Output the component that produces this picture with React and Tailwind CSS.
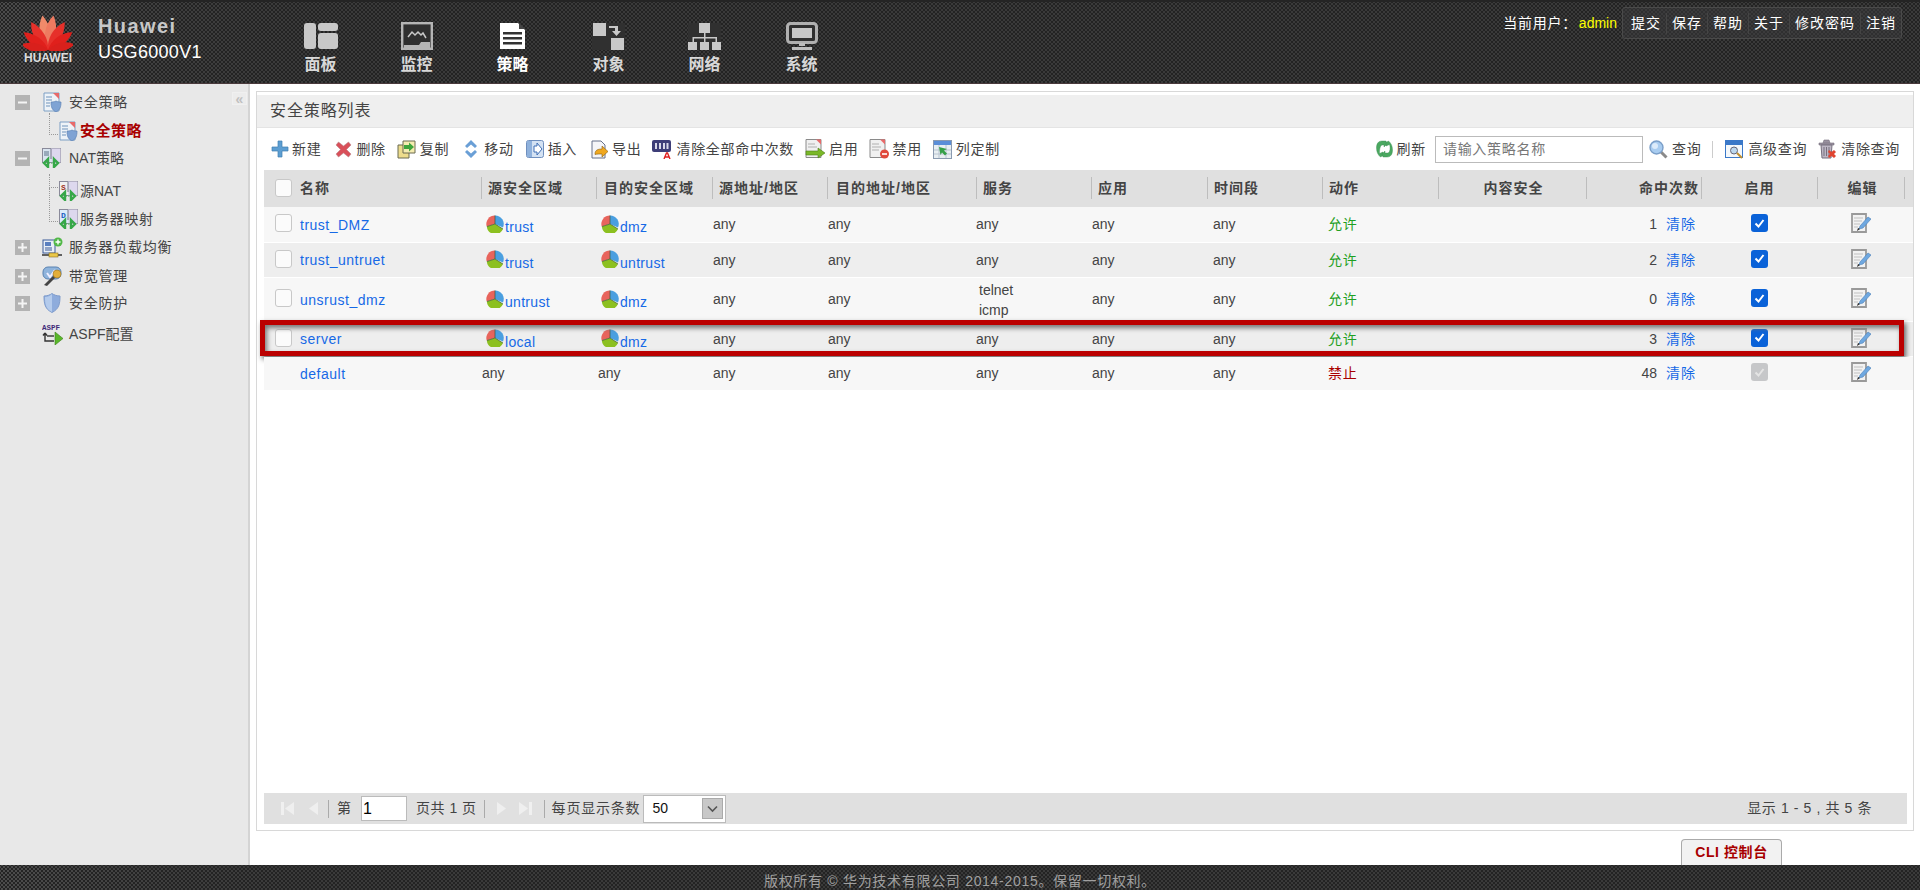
import React from "react";

const FONT = "font-['Liberation_Sans','Noto_Sans_CJK_SC',sans-serif]";
const DOTS =
  "bg-[radial-gradient(circle,#232323_0.9px,transparent_1.2px),radial-gradient(circle,#232323_0.9px,transparent_1.2px),linear-gradient(to_right,#4c4c4c,#3e3e3e_170px,#3a3a3a_300px)] bg-size-[4px_4px,4px_4px,100%_100%] bg-position-[0_0,2px_2px,0_0]";
const COLS =
  "grid grid-cols-[217px_115px_116px_115px_149px_115px_116px_115px_116px_148px_115px_116px_88px]";

function Logo() {
  const petals = [
    [-9, 1, "#f08a6a"],
    [9, 1, "#ee7a60"],
    [-31, 0.93, "#e6302a"],
    [31, 0.93, "#e6302a"],
    [-54, 0.86, "#e0201c"],
    [54, 0.86, "#e0201c"],
    [-78, 0.78, "#d9201c"],
    [78, 0.78, "#d9201c"],
  ];
  return (
    <svg width="50" height="38" viewBox="0 0 50 38" className="block">
      {petals.map(([r, s, c], i) => (
        <path
          key={i}
          d="M0 0C-7 -9 -8 -24 0 -35C7 -24 7 -9 0 0Z"
          fill={c}
          transform={`translate(25 37) rotate(${r}) scale(${s})`}
        />
      ))}
    </svg>
  );
}

const N1 = () => (
  <svg width="34" height="26" viewBox="0 0 34 26" fill="#c8c8c8">
    <rect x="0" y="0" width="12" height="26" rx="3" />
    <rect x="14" y="0" width="20" height="8" rx="3" />
    <rect x="14" y="10" width="20" height="16" rx="3" />
  </svg>
);
const N2 = () => (
  <svg width="32" height="28" viewBox="0 0 32 28">
    <rect x="1.2" y="1.2" width="29.6" height="25.6" fill="#2f2f2f" stroke="#b5b5b5" strokeWidth="2.4" />
    <path d="M7 15l4-5 3 3 3-3 3 3 2-2 3 5" fill="none" stroke="#c8c8c8" strokeWidth="1.5" />
    <path d="M3 23h15l2-3h9v6H3z" fill="#b5b5b5" />
  </svg>
);
const N3 = () => (
  <svg width="27" height="26" viewBox="0 0 27 26">
    <path d="M1 0h18l7 7v19H1z" fill="#fff" />
    <path d="M20 0l6 6h-6z" fill="#444" />
    <path d="M4 9h19v2.5H4zM4 14h19v2.5H4zM4 19h19v2.5H4z" fill="#333" />
  </svg>
);
const N4 = () => (
  <svg width="33" height="27" viewBox="0 0 33 27">
    <rect width="33" height="27" fill="#303030" />
    <rect x="1" y="0" width="13" height="13" fill="#c8c8c8" />
    <rect x="19" y="15" width="13" height="12" fill="#c8c8c8" />
    <path d="M17 3h9v5h3l-4.500 5-4.500-5h3V5h-6z" fill="#c8c8c8" />
  </svg>
);
const N5 = () => (
  <svg width="33" height="27" viewBox="0 0 33 27" fill="#c8c8c8">
    <rect width="33" height="27" fill="#303030" />
    <rect x="11" y="0" width="11" height="10" />
    <rect x="0" y="19" width="9" height="8" />
    <rect x="12" y="19" width="9" height="8" />
    <rect x="24" y="19" width="9" height="8" />
    <path d="M16 10h1.500v4H29v5h-1.500v-3.500h-10V19H16v-3.500H6V19H4.500v-5H16z" />
  </svg>
);
const N6 = () => (
  <svg width="32" height="28" viewBox="0 0 32 28">
    <rect x="1.500" y="1.500" width="29" height="19" rx="3" fill="#303030" stroke="#b0b0b0" strokeWidth="3" />
    <rect x="6" y="6" width="20" height="10" fill="#c8c8c8" />
    <path d="M13 21h6v3h-6zM6 25h20v3H6z" fill="#bdbdbd" />
  </svg>
);

const Pie = () => (
  <svg width="18" height="18" viewBox="0 0 18 18" className="shrink-0">
    <path d="M9 9L.7 11.500A8.500 8.500 0 0 1 9 .5z" fill="#e8645c" />
    <path d="M9 9V.5a8.500 8.500 0 0 1 8 12z" fill="#4a9fe0" />
    <path d="M.8 11.500L9 9l8 5a8.500 8.500 0 0 1-16.200-2.500z" fill="#8cc020" />
    <path d="M9 9l8 5M9 9L1 11.500M9 9V.5" stroke="#3a5a3a" strokeWidth=".7" />
  </svg>
);

const Check = ({ on, off }) =>
  on ? (
    <div className={`w-[17px] h-[18px] rounded-[3px] flex items-center justify-center ${off ? "bg-[#c6c7c9]" : "bg-[#0a62d8]"}`}>
      <svg width="13" height="13" viewBox="0 0 13 13">
        <path d="M2.500 6.500l3 3 5-6.500" fill="none" stroke={off ? "#e4e4e4" : "#fff"} strokeWidth="2" />
      </svg>
    </div>
  ) : (
    <div className="w-[17px] h-[18px] rounded-[3px] border border-[#c8c8c8] bg-[#fbfbfb]" />
  );

const Edit = () => (
  <svg width="20" height="20" viewBox="0 0 20 20">
    <path d="M1 1h14v18H1z" fill="#f2f2f2" stroke="#9a9a9a" strokeWidth="1.800" />
    <path d="M3 5h9M3 8h8M3 11h6M3 14h4" stroke="#c0c0c0" strokeWidth="1.200" />
    <path d="M8 16l1-3 8-9 3 2-8 9z" fill="#6fa8e0" stroke="#4a80b8" strokeWidth=".6" />
    <path d="M6 18l3-2-2-1z" fill="#222" />
  </svg>
);

const Ic = {
  plus: (
    <svg width="18" height="18" viewBox="0 0 18 18">
      <path d="M7 1h4v6h6v4h-6v6H7v-6H1V7h6z" fill="#5d9ed2" stroke="#3f7eb3" strokeWidth=".7" strokeLinejoin="round" />
    </svg>
  ),
  del: (
    <svg width="17" height="17" viewBox="0 0 17 17">
      <path d="M3.500 1L8.500 5l5-4 2.500 3-4.500 4.500 4.500 4.500-2.500 3-5-4-5 4L1 13l4.500-4.500L1 4z" fill="#d9505a" stroke="#b8868a" strokeWidth=".6" />
    </svg>
  ),
  copy: (
    <svg width="19" height="19" viewBox="0 0 19 19">
      <path d="M1 5h11v13H1z" fill="#eddc8c" stroke="#6a6a50" />
      <path d="M6 1h12v12H6z" fill="#f5ecb0" stroke="#6a6a50" />
      <path d="M7 5h5V2.500L17 7l-5 4.500V9H7z" fill="#3fa53c" />
    </svg>
  ),
  move: (
    <svg width="14" height="20" viewBox="0 0 14 20">
      <path d="M7 1l6 6-2 2-4-3.500L3 9 1 7z" fill="#6a9fd6" />
      <path d="M7 19l6-6-2-2-4 3.500L3 11l-2 2z" fill="#6a9fd6" />
    </svg>
  ),
  insert: (
    <svg width="18" height="18" viewBox="0 0 18 18">
      <rect x=".5" y=".5" width="17" height="17" rx="2" fill="#d4e2f3" stroke="#6f8fbe" />
      <path d="M1 1h5v16H1z" fill="#8fb1dc" />
      <path d="M8 6h3V3l5 6-5 6v-3H8z" fill="#fff" stroke="#3f6fb5" />
    </svg>
  ),
  exp: (
    <svg width="19" height="19" viewBox="0 0 19 19">
      <path d="M2 1h9l4 4v13H2z" fill="#f5f5f8" stroke="#66708a" />
      <path d="M5 14c0-4 3-5 7-5V6l6 5.500-6 5.500v-3c-3 0-5 0-7 .5z" fill="#f0a820" stroke="#8a6010" strokeWidth=".6" />
    </svg>
  ),
  clear: (
    <svg width="20" height="20" viewBox="0 0 20 20">
      <rect x="0" y="1" width="19" height="12" rx="2" fill="#3e3e78" />
      <path d="M4 4v6M8 4v6M12 4v6M15.500 4v6" stroke="#d8d8e8" strokeWidth="2" />
      <path d="M12 20l2.500-6h1l2.500 6M13 18h4" stroke="#e02020" strokeWidth="1.400" fill="none" />
    </svg>
  ),
  on: (
    <svg width="20" height="20" viewBox="0 0 20 20">
      <path d="M1 .5h15v18H1z" fill="#f0f0f0" stroke="#8a8a8a" />
      <path d="M11 .5l5 5v-5z" fill="#e86a6a" />
      <path d="M3 5h7M3 8h9" stroke="#b0b0b0" />
      <path d="M1 12h12V9l7 5-7 5v-3H1z" fill="#7ab828" stroke="#4f8018" strokeWidth=".6" />
    </svg>
  ),
  off: (
    <svg width="20" height="20" viewBox="0 0 20 20">
      <path d="M1 .5h15v18H1z" fill="#f0f0f0" stroke="#8a8a8a" />
      <path d="M11 .5l5 5v-5z" fill="#e86a6a" />
      <path d="M3 5h7M3 8h9M3 11h7" stroke="#b0b0b0" />
      <circle cx="15.500" cy="15" r="4.500" fill="#e04a3c" />
      <path d="M13 15h5" stroke="#fff" strokeWidth="1.600" />
    </svg>
  ),
  cols: (
    <svg width="19" height="19" viewBox="0 0 19 19">
      <rect x=".5" y=".5" width="18" height="18" fill="#e8eef2" stroke="#8a9ab0" />
      <rect x="1" y="1" width="17" height="4" fill="#5a8ed8" />
      <path d="M1 10h17M1 14h17M6 5v13M13 5v13" stroke="#b8c4d0" />
      <path d="M6 7l8 2-3 1.500 3 3-2 2-3-3L7.500 15z" fill="#35a048" />
    </svg>
  ),
  refresh: (
    <svg width="17" height="18" viewBox="0 0 17 18">
      <path d="M10 1H6C2 1 .5 4 .5 8c0 4 1.500 7 4 9l2.500-1.500V12l-3.500 1.500C3.500 11 3.500 6 6 5h2v2l3-3z" fill="#4aa860" stroke="#3a8a50" strokeWidth=".4" />
      <path d="M7 17h4c4 0 5.500-3 5.500-7 0-4-1.500-7-4-9L10 2.500V6l3.500-1.500c1 2.500 1 7.500-1.500 8.500H9v-2l-3 3z" fill="#4aa860" stroke="#3a8a50" strokeWidth=".4" />
    </svg>
  ),
  search: (
    <svg width="19" height="19" viewBox="0 0 19 19">
      <path d="M12 12l5.500 5.500" stroke="#8a8a8a" strokeWidth="3" />
      <circle cx="7.500" cy="7.500" r="6.500" fill="#a8ccf0" stroke="#7a9ec8" strokeWidth="1.400" />
      <circle cx="6" cy="6" r="3" fill="#dcebfa" />
    </svg>
  ),
  adv: (
    <svg width="19" height="19" viewBox="0 0 19 19">
      <rect x=".5" y=".5" width="17" height="17" fill="#f4f8fb" stroke="#3a78c8" />
      <rect x="1" y="1" width="16" height="4" fill="#3a78c8" />
      <circle cx="9" cy="10.500" r="3.500" fill="#bcd8ef" stroke="#667" />
      <path d="M12 13l5 5" stroke="#c09030" strokeWidth="2" />
    </svg>
  ),
  trash: (
    <svg width="20" height="20" viewBox="0 0 20 20">
      <path d="M1 4h15v2H1zM5 4l1-3h5l1 3" fill="#9a92a0" stroke="#77707e" strokeWidth=".6" />
      <path d="M3 6h11l-1 13H4z" fill="#bdb6c4" stroke="#77707e" />
      <path d="M6 8v9M8.500 8v9M11 8v9" stroke="#77707e" />
      <path d="M11 11l2.500 2 2.500-2 2 2-2 2 2 2-2 2-2.500-2-2.500 2-1-2 2-2-2-2z" fill="#e04430" />
    </svg>
  ),
};

const DocShield = () => (
  <svg width="19" height="20" viewBox="0 0 19 20" className="shrink-0">
    <path d="M1 1h15v18H1z" fill="#eef3f8" stroke="#7d9fc4" />
    <path d="M10 1l6 6V1z" fill="#e86a6a" />
    <path d="M3 5h6M3 8h6M3 11h4M3 14h4" stroke="#6f93bb" />
    <path d="M8 10c3 0 4-.5 5-1 1 .5 2 1 5 1 0 5-1 8-5 10-4-2-5-5-5-10z" fill="#7fa3d4" stroke="#5d82b5" strokeWidth=".7" />
  </svg>
);
const Nat = ({ l, c, bg }) => (
  <svg width="20" height="20" viewBox="0 0 20 20" className="shrink-0">
    <rect x=".5" y=".5" width="18" height="14" fill={bg} stroke="#8a8a9a" />
    <rect x="9" y=".5" width="9.500" height="14" fill="#ddd8ee" />
    <path d="M9 1v10" stroke="#778" />
    {l ? (
      <text x="2" y="9" fontSize="8" fontWeight="700" fill={c} fontFamily="Liberation Mono">{l}</text>
    ) : (
      <path d="M2 3h5v5H2z" fill="#9ab" />
    )}
    <path d="M6 11l-4 4 4 4zM12 11l4 4-4 4z" fill="none" stroke="#36a848" strokeWidth="2.400" />
    <path d="M6.500 15h5" stroke="#36a848" strokeWidth="1.200" strokeDasharray="1.500 1" />
  </svg>
);
const Lb = () => (
  <svg width="21" height="21" viewBox="0 0 21 21" className="shrink-0">
    <rect x="1" y="3" width="12" height="13" fill="#e8eef6" stroke="#3a5a98" />
    <rect x="3" y="5" width="6" height="4" fill="#5a7fbf" />
    <path d="M3 11h7M3 13h7" stroke="#3a5a98" />
    <circle cx="16" cy="5" r="4.500" fill="#52b848" />
    <path d="M13.500 5h5M16 2.500v5" stroke="#fff" strokeWidth="1.400" />
    <path d="M0 18h20" stroke="#333" strokeWidth="1.500" />
    <rect x="7" y="16" width="9" height="4" fill="#eac84a" stroke="#8a7020" strokeWidth=".6" />
  </svg>
);
const Band = () => (
  <svg width="20" height="20" viewBox="0 0 20 20" className="shrink-0">
    <rect x="1" y="1" width="18" height="12" rx="5" fill="#8fb4dc" stroke="#5a82b0" />
    <path d="M5 7l3 4 5-7" fill="none" stroke="#eef" strokeWidth="2" />
    <path d="M2 19l10-10 2 2L5 20z" fill="#444" />
    <circle cx="15" cy="8" r="4" fill="#e2ae3a" stroke="#9a7420" strokeWidth=".6" />
  </svg>
);
const Shield = () => (
  <svg width="18" height="20" viewBox="0 0 18 20" className="shrink-0">
    <path d="M1 3c3 0 6-1 8-2.500C11 2 14 3 17 3c0 8-1 13-8 16.500C2 16 1 11 1 3z" fill="#8eacdc" stroke="#7f9ccc" />
    <path d="M9 1v18C3 16 2 11 2 4c3 0 5-1 7-3z" fill="#b4cbec" />
  </svg>
);
const Aspf = () => (
  <svg width="21" height="22" viewBox="0 0 21 22" className="shrink-0">
    <text x="0" y="6.500" fontSize="7.500" fontWeight="700" fill="#3f2a78" fontFamily="Liberation Mono">ASPF</text>
    <path d="M3 10v8h9M3 10l-2 2.500M3 10l2 2.500" stroke="#333" strokeWidth="1.400" fill="none" />
    <path d="M13 9l8 6.500-8 6.500z" fill="#5ab82a" stroke="#3a8018" strokeWidth=".6" />
    <path d="M5 13h7" stroke="#333" strokeWidth="1.400" />
  </svg>
);

const Pm = ({ minus }) => (
  <div className="w-[15px] h-[15px] bg-[#b3b3b3] flex items-center justify-center shrink-0">
    <svg width="11" height="11" viewBox="0 0 11 11">
      <path d={minus ? "M1 4.500h9v2H1z" : "M1 4.500h3.500V1h2v3.500H10v2H6.500V10h-2V6.500H1z"} fill="#f4f4f4" />
    </svg>
  </div>
);

function SideRow({ mt, minus, plus, icon, children, iconGap }) {
  return (
    <div className={`flex items-center h-[28px] pl-[15px] ${mt}`}>
      {minus || plus ? <Pm minus={minus} /> : <div className="w-[15px]" />}
      <div className="w-[34px] flex justify-end pr-[2px] shrink-0">
        <div className="w-[20px] flex justify-center">{icon}</div>
      </div>
      <span className={`text-[14px] text-[#444] ${iconGap}`}>{children}</span>
    </div>
  );
}

function SubRow({ mt, line, icon, children, cls }) {
  return (
    <div className={`flex items-center h-[28px] pl-[49px] ${mt}`}>
      <div className={`w-[9px] border-l border-b border-dotted border-[#999] self-start ${line}`} />
      <div className="w-[21px] flex justify-center shrink-0">{icon}</div>
      <span className={`ml-[1px] ${cls}`}>{children}</span>
    </div>
  );
}

function Sidebar() {
  return (
    <aside className="w-[250px] shrink-0 bg-[#e8e8e8] border-r-2 border-[#d4d4d4] relative">
      <div className="absolute right-[1px] top-[8px] w-[15px] h-[13px] bg-[#ececec] border border-[#f0f0f0] flex items-center justify-center text-[#c0c0c0] text-[14px] leading-none font-bold">«</div>
      <SideRow mt="mt-[4px]" minus icon={<DocShield />} iconGap="ml-[5px] tracking-[0.75px]">安全策略</SideRow>
      <SubRow mt="mt-[1px]" line="mt-[-4px] h-[22px]" icon={<DocShield />} cls="text-[15px] font-bold text-[#a80000] tracking-[0.5px]">安全策略</SubRow>
      <SideRow mt="mt-[-1px]" minus icon={<Nat bg="#d9e4f0" />} iconGap="ml-[5px]">NAT策略</SideRow>
      <SubRow mt="mt-[5px]" line="mt-[-3px] h-[14px]" icon={<Nat l="S" c="#a03020" bg="#f0f0f0" />} cls="text-[14px] text-[#444]">源NAT</SubRow>
      <SubRow mt="mt-0" line="mt-[-17px] h-[34px]" icon={<Nat l="D" c="#2060c0" bg="#dcebfa" />} cls="text-[14px] text-[#444] tracking-[0.75px]">服务器映射</SubRow>
      <SideRow mt="mt-0" plus icon={<Lb />} iconGap="ml-[5px] tracking-[0.75px]">服务器负载均衡</SideRow>
      <SideRow mt="mt-[1px]" plus icon={<Band />} iconGap="ml-[5px] tracking-[0.75px]">带宽管理</SideRow>
      <SideRow mt="mt-[-1px]" plus icon={<Shield />} iconGap="ml-[5px] tracking-[0.75px]">安全防护</SideRow>
      <SideRow mt="mt-[3px]" icon={<Aspf />} iconGap="ml-[5px]">ASPF配置</SideRow>
    </aside>
  );
}

function Tool({ icon, label, ml, gap = "ml-[3px]" }) {
  return (
    <div className={`flex items-center shrink-0 ${ml}`}>
      {icon}
      <span className={`${gap} text-[14px] text-[#444] tracking-[0.7px] whitespace-nowrap`}>{label}</span>
    </div>
  );
}

function Toolbar() {
  return (
    <div className="h-[42px] flex items-center pl-[14px] pr-[13px]">
      <Tool icon={Ic.plus} label="新建" />
      <Tool icon={Ic.del} label="删除" ml="ml-[14px]" gap="ml-[4px]" />
      <Tool icon={Ic.copy} label="复制" ml="ml-[11px]" gap="ml-[4px]" />
      <Tool icon={Ic.move} label="移动" ml="ml-[15px]" gap="ml-[6px]" />
      <Tool icon={Ic.insert} label="插入" ml="ml-[12px]" gap="ml-[4px]" />
      <Tool icon={Ic.exp} label="导出" ml="ml-[13px]" />
      <Tool icon={Ic.clear} label="清除全部命中次数" ml="ml-[11px]" gap="ml-[4px]" />
      <Tool icon={Ic.on} label="启用" ml="ml-[11px]" gap="ml-[4px]" />
      <Tool icon={Ic.off} label="禁用" ml="ml-[11px]" />
      <Tool icon={Ic.cols} label="列定制" ml="ml-[11px]" gap="ml-[4px]" />
      <div className="flex-1" />
      <Tool icon={Ic.refresh} label="刷新" gap="ml-[4px]" />
      <div className="ml-[9px] w-[208px] h-[27px] border border-[#bbb] pl-[7px] flex items-center text-[14px] text-[#777] tracking-[0.7px]">请输入策略名称</div>
      <Tool icon={Ic.search} label="查询" ml="ml-[6px]" gap="ml-[4px]" />
      <div className="ml-[11px] w-px h-[17px] bg-[#ccc]" />
      <Tool icon={Ic.adv} label="高级查询" ml="ml-[12px]" gap="ml-[4px]" />
      <Tool icon={Ic.trash} label="清除查询" ml="ml-[11px]" gap="ml-[3px]" />
    </div>
  );
}

function Th({ cls, children, first }) {
  return (
    <div className={`h-[22px] flex items-center text-[14px] font-bold text-[#444] tracking-[1px] ${first ? "" : "border-l border-[#bdbdbd]"} ${cls}`}>
      {children}
    </div>
  );
}

function HeadRow() {
  return (
    <div className={`${COLS} h-[37px] bg-[#e0e0e0] items-center border-b border-[#e0e0e0]`}>
      <Th first cls="pl-[11px]"><Check /><span className="ml-[8px]">名称</span></Th>
      <Th cls="pl-[6px]">源安全区域</Th>
      <Th cls="pl-[7px]">目的安全区域</Th>
      <Th cls="pl-[6px]">源地址/地区</Th>
      <Th cls="pl-[8px]">目的地址/地区</Th>
      <Th cls="pl-[6px]">服务</Th>
      <Th cls="pl-[6px]">应用</Th>
      <Th cls="pl-[6px]">时间段</Th>
      <Th cls="pl-[6px]">动作</Th>
      <Th cls="justify-center pl-[2px]">内容安全</Th>
      <Th cls="justify-end pr-[2px]">命中次数</Th>
      <Th cls="justify-center">启用</Th>
      <Th cls="justify-center border-r pl-[3px]">编辑</Th>
    </div>
  );
}

function Zone({ z, x }) {
  if (!z) return <div className={`flex items-center ${x}`}>any</div>;
  return (
    <div className="flex items-center pl-[5px] pb-[2px]">
      <Pie />
      <a className="text-[#1669e6] ml-[1px] mt-[8px] tracking-[0.3px]">{z}</a>
    </div>
  );
}

function Row({ r }) {
  return (
    <div className={`${COLS} relative ${r.h} ${r.bg} text-[14px] text-[#444] items-stretch`}>
      <div className="flex items-center pl-[11px]">
        {r.nocheck ? <div className="w-[17px]" /> : <div className="mb-[3px]"><Check /></div>}
        <a className="ml-[8px] text-[#1669e6] tracking-[0.5px] mb-[-1px]">{r.name}</a>
      </div>
      <Zone z={r.src} x="pl-[1px]" />
      <Zone z={r.dst} x="pl-[2px]" />
      <div className="flex items-center pl-[1px]">any</div>
      <div className="flex items-center pl-[1px]">any</div>
      {r.svc ? (
        <div className="flex flex-col justify-center pl-[3px] leading-[20px]">
          {r.svc.map((s) => <div key={s}>{s}</div>)}
        </div>
      ) : (
        <div className="flex items-center">any</div>
      )}
      <div className="flex items-center pl-[1px]">any</div>
      <div className="flex items-center pl-[6px]">any</div>
      <div className={`flex items-center pl-[6px] tracking-[0.7px] ${r.deny ? "text-[#a80000]" : "text-[#1fa01f]"}`}>{r.deny ? "禁止" : "允许"}</div>
      <div />
      <div className="flex items-center">
        <span className="w-[71px] text-right">{r.hit}</span>
        <a className="ml-[9px] text-[#1669e6] tracking-[1px]">清除</a>
      </div>
      <div className="flex items-center pl-[50px] pb-[3px]"><Check on off={r.nocheck} /></div>
      <div className="flex items-center pl-[34px] pb-[3px]"><Edit /></div>
      {r.mark && (
        <div className="absolute left-[-4px] top-[-2px] w-[1644px] h-[36px] border-[5px] border-[#bb0000] shadow-[2px_3px_5px_#666,inset_2px_3px_5px_#777] pointer-events-none" />
      )}
    </div>
  );
}

const rows = [
  { name: "trust_DMZ", src: "trust", dst: "dmz", hit: 1, h: "h-[35px]", bg: "bg-[#f7f7f7]" },
  { name: "trust_untruet", src: "trust", dst: "untrust", hit: 2, h: "h-[34px]", bg: "bg-[#eeeeee]" },
  { name: "unsrust_dmz", src: "untrust", dst: "dmz", svc: ["telnet", "icmp"], hit: 0, h: "h-[43px]", bg: "bg-[#f7f7f7]" },
  { name: "server", src: "local", dst: "dmz", hit: 3, h: "h-[34px]", bg: "bg-[#eeeeee]", mark: true },
  { name: "default", hit: 48, h: "h-[33px]", bg: "bg-[#f7f7f7]", nocheck: true, deny: true },
];

const Tri = ({ flip, bar }) => (
  <svg width="14" height="16" viewBox="0 0 14 16" className={flip ? "-scale-x-100" : ""}>
    {bar && <rect x="0" y="1" width="3" height="13" fill="#f0f0f0" />}
    <path d="M13 1v13L4 7.500z" fill="#efefef" />
  </svg>
);

function Pager() {
  return (
    <div className="h-[31px] mb-[6px] ml-[7px] mr-[6px] bg-[#e0e0e0] flex items-center text-[14px] text-[#444]">
      <div className="ml-[17px]"><Tri bar /></div>
      <div className="ml-[10px]"><Tri /></div>
      <div className="ml-[9px] w-px h-[18px] bg-[#aaa]" />
      <span className="ml-[8px]">第</span>
      <div className="ml-[10px] w-[46px] h-[25px] bg-white border border-[#bbb] pl-[1px] text-[16px] text-black flex items-center">1</div>
      <span className="ml-[9px] whitespace-nowrap tracking-[0.5px]">页共 1 页</span>
      <div className="ml-[7px] w-px h-[18px] bg-[#aaa]" />
      <div className="ml-[11px]"><Tri flip /></div>
      <div className="ml-[8px]"><Tri flip bar /></div>
      <div className="ml-[12px] w-px h-[18px] bg-[#aaa]" />
      <span className="ml-[7px] tracking-[0.8px] whitespace-nowrap">每页显示条数</span>
      <div className="ml-[3px] w-[83px] h-[28px] bg-white border border-[#bbb] flex items-center pl-[8px] text-[#111]">
        50
        <div className="ml-auto mr-[2px] w-[21px] h-[21px] bg-[#c8c8c8] border border-[#aaa] flex items-center justify-center">
          <svg width="11" height="8" viewBox="0 0 11 8"><path d="M1 1.500l4.500 4.500L10 1.500" fill="none" stroke="#555" strokeWidth="1.600" /></svg>
        </div>
      </div>
      <div className="flex-1" />
      <span className="mr-[35px] whitespace-nowrap tracking-[0.6px]">显示 1 - 5 , 共 5 条</span>
    </div>
  );
}

function Main() {
  return (
    <main className="flex-1 min-w-0 flex flex-col pl-[6px] pr-[6px] pt-[7px] bg-white">
      <section className="h-[740px] border border-[#d8d8d8] flex flex-col">
        <h2 className="mt-[3px] h-[33px] bg-[#efefef] border-b border-[#e4e4e4] flex items-center pl-[13px] text-[16px] font-normal text-[#444] tracking-[0.9px]">安全策略列表</h2>
        <Toolbar />
        <div className="pl-[7px]">
          <HeadRow />
          <div className="flex flex-col gap-px">
            {rows.map((r) => <Row key={r.name} r={r} />)}
          </div>
        </div>
        <div className="flex-1" />
        <Pager />
      </section>
      <div className="mt-auto flex justify-end mr-[132px]">
        <div className="w-[101px] h-[26px] bg-[#f2f2f2] border border-b-0 border-[#aaa] rounded-t-[4px] flex items-center justify-center text-[14px] font-bold text-[#a80000] tracking-[0.6px]">CLI 控制台</div>
      </div>
    </main>
  );
}

function Nav({ icon, label, active, cls }) {
  return (
    <div className={`w-[33px] flex flex-col items-center shrink-0 ${cls}`}>
      <div className="h-[28px] flex items-center justify-center">{icon}</div>
      <div className={`mt-[5px] whitespace-nowrap text-[16px] font-bold leading-[20px] ${active ? "text-white" : "text-[#d8d8d8]"}`}>{label}</div>
    </div>
  );
}

function Header() {
  const links = ["提交", "保存", "帮助", "关于", "修改密码", "注销"];
  return (
    <header className={`h-[84px] shrink-0 flex border-b border-[#4a3a3c] border-t-2 border-t-[#242424] ${DOTS}`}>
      <div className="w-[98px] shrink-0 pl-[23px] pt-[11px]">
        <Logo />
        <div className="w-[50px] text-center text-[12px] font-bold text-[#ddd] leading-[10px] mt-[2px]">HUAWEI</div>
      </div>
      <div className="w-[206px] shrink-0 pt-[13px]">
        <div className="text-[20px] font-bold text-[#c8c8c8] leading-[22px] tracking-[1.400px]">Huawei</div>
        <div className="text-[18px] text-white leading-[22px] mt-[4px] tracking-[0.3px]">USG6000V1</div>
      </div>
      <div className="flex items-start pt-[20px]">
        <Nav icon={<N1 />} label="面板" />
        <Nav icon={<N2 />} label="监控" cls="ml-[63px]" />
        <Nav icon={<N3 />} label="策略" active cls="ml-[63px]" />
        <Nav icon={<N4 />} label="对象" cls="ml-[63px]" />
        <Nav icon={<N5 />} label="网络" cls="ml-[63px]" />
        <Nav icon={<N6 />} label="系统" cls="ml-[64px]" />
      </div>
      <div className="flex-1" />
      <div className="flex items-start pt-[5px] pr-[18px] text-[14px] text-white">
        <div className="h-[32px] flex items-center whitespace-nowrap">
          <span className="tracking-[0.7px]">当前用户：</span>
          <span className="text-[#ffff00] ml-[2px]">admin</span>
        </div>
        <div className="ml-[5px] h-[32px] bg-[#3c3c3e]/50 border border-[#4a4a4a] rounded-[3px] flex items-center pl-[8px] pr-[5px]">
          {links.map((l, i) => (
            <div key={l} className={`tracking-[1px] whitespace-nowrap ${i ? "ml-[5px] pl-[5px] border-l border-[#444]" : ""}`}>{l}</div>
          ))}
        </div>
      </div>
    </header>
  );
}

export default function App() {
  return (
    <div className={`w-[1920px] h-[890px] overflow-hidden flex flex-col bg-white ${FONT}`}>
      <Header />
      <div className="flex-1 min-h-0 flex">
        <Sidebar />
        <Main />
      </div>
      <footer className={`h-[25px] shrink-0 text-center text-[14px] leading-[32px] tracking-[0.7px] text-[#a0a0a0] ${DOTS}`}>
        版权所有 © 华为技术有限公司 2014-2015。保留一切权利。
      </footer>
    </div>
  );
}
